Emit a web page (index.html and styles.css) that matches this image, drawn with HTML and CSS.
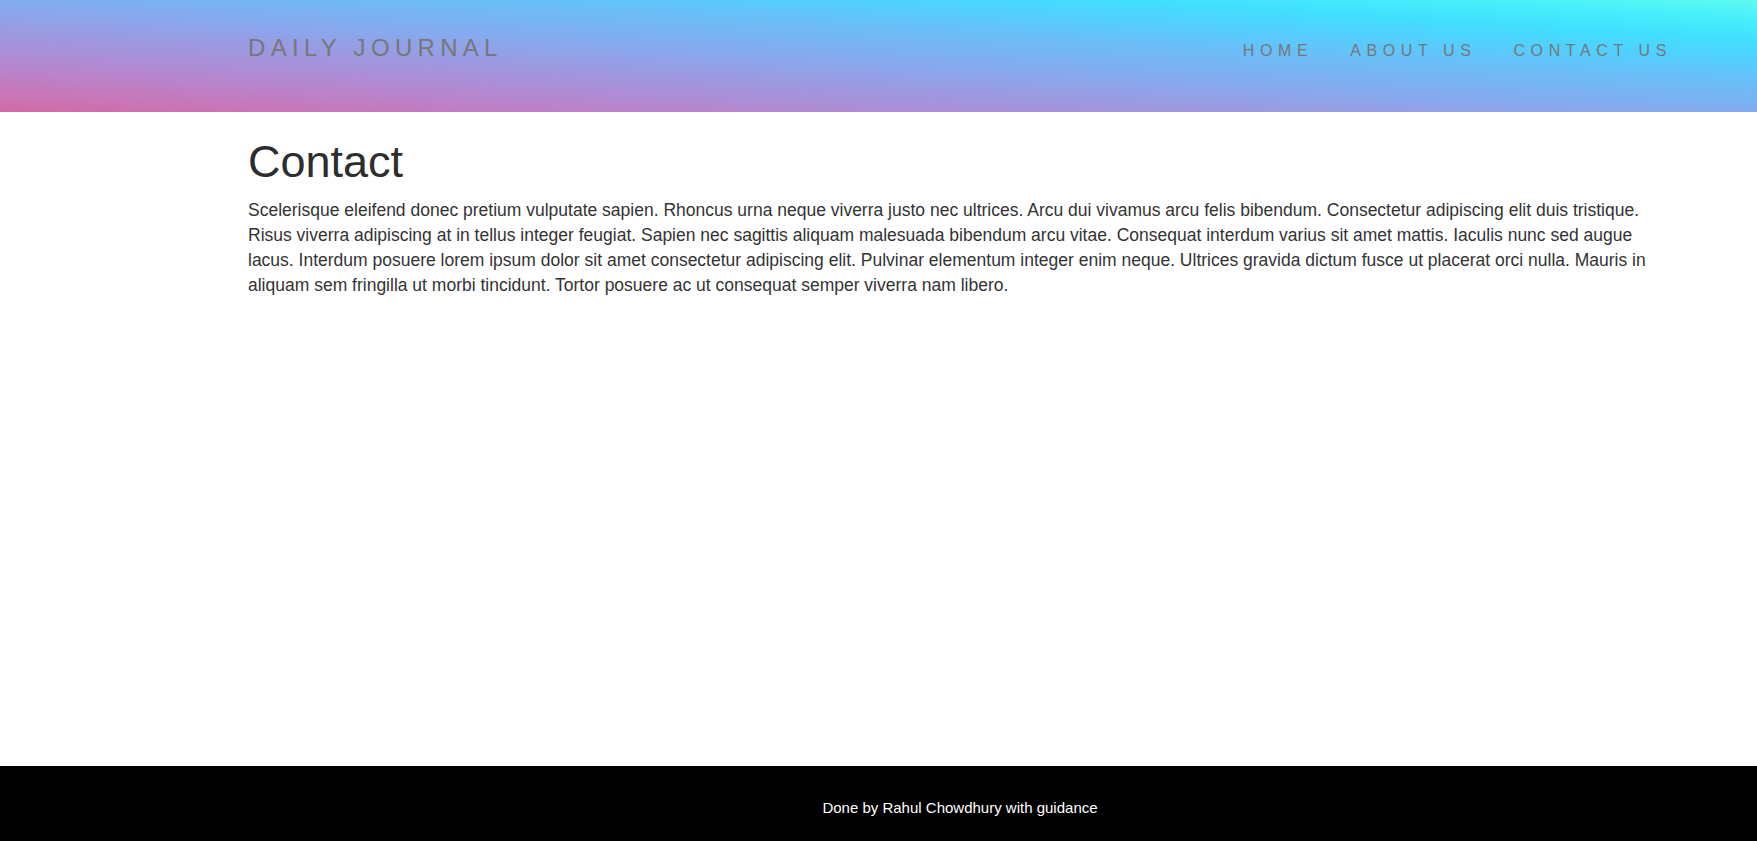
FILE: index.html
```html
<!DOCTYPE html>
<html lang="en">
<head>
<meta charset="utf-8">
<title>Daily Journal</title>
<link rel="stylesheet" href="styles.css">
</head>
<body>
<header class="site-header">
  <p class="brand">DAILY JOURNAL</p>
  <ul class="nav">
    <li><a href="#">HOME</a></li>
    <li><a href="#">ABOUT US</a></li>
    <li><a href="#">CONTACT US</a></li>
  </ul>
</header>
<main class="content">
  <h1 class="page-title">Contact</h1>
  <p class="page-text">Scelerisque eleifend donec pretium vulputate sapien. Rhoncus urna neque viverra justo nec ultrices. Arcu dui vivamus arcu felis bibendum. Consectetur adipiscing elit duis tristique. Risus viverra adipiscing at in tellus integer feugiat. Sapien nec sagittis aliquam malesuada bibendum arcu vitae. Consequat interdum varius sit amet mattis. Iaculis nunc sed augue lacus. Interdum posuere lorem ipsum dolor sit amet consectetur adipiscing elit. Pulvinar elementum integer enim neque. Ultrices gravida dictum fusce ut placerat orci nulla. Mauris in aliquam sem fringilla ut morbi tincidunt. Tortor posuere ac ut consequat semper viverra nam libero.</p>
</main>
<footer class="site-footer">
  <p class="footer-text">Done by Rahul Chowdhury with guidance</p>
</footer>
</body>
</html>
```

FILE: styles.css
```css
html, body {
  margin: 0;
  padding: 0;
}

body {
  font-family: "Liberation Sans", Arial, sans-serif;
  color: #333;
  background: #fff;
  min-height: 100vh;
  display: flex;
  flex-direction: column;
}

.site-header {
  height: 112px;
  box-sizing: border-box;
  padding: 36px 85px 0 248px;
  display: flex;
  justify-content: space-between;
  align-items: flex-start;
  background-image: linear-gradient(to right top, #d16ba5, #c777b9, #ba83ca, #aa8fd8, #9a9ae1, #8aa7ec, #79b3f4, #69bff8, #52cffe, #41dfff, #46eefa, #5ffbf1);
}

.brand {
  margin: 0;
  font-size: 24px;
  line-height: 1;
  letter-spacing: 5.3px;
  color: #777;
}

.nav {
  list-style: none;
  margin: 7px 0 0;
  padding: 0;
  display: flex;
  gap: 37px;
  line-height: 1;
}

.nav a {
  font-size: 16px;
  line-height: 1;
  letter-spacing: 5.6px;
  color: #777;
  text-decoration: none;
}

.content {
  flex: 1;
  padding: 0 85px 0 248px;
}

.page-title {
  margin: 23px 0 9px;
  font-size: 45px;
  font-weight: 400;
  line-height: 1.2;
  color: #2d2d2d;
}

.page-text {
  margin: 0;
  font-size: 17.5px;
  line-height: 25px;
  color: #333;
}

.site-footer {
  background: #000;
  padding: 33px 85px 25px 248px;
}

.footer-text {
  margin: 0;
  text-align: center;
  font-size: 15px;
  line-height: 17px;
  color: #fff;
}
```
